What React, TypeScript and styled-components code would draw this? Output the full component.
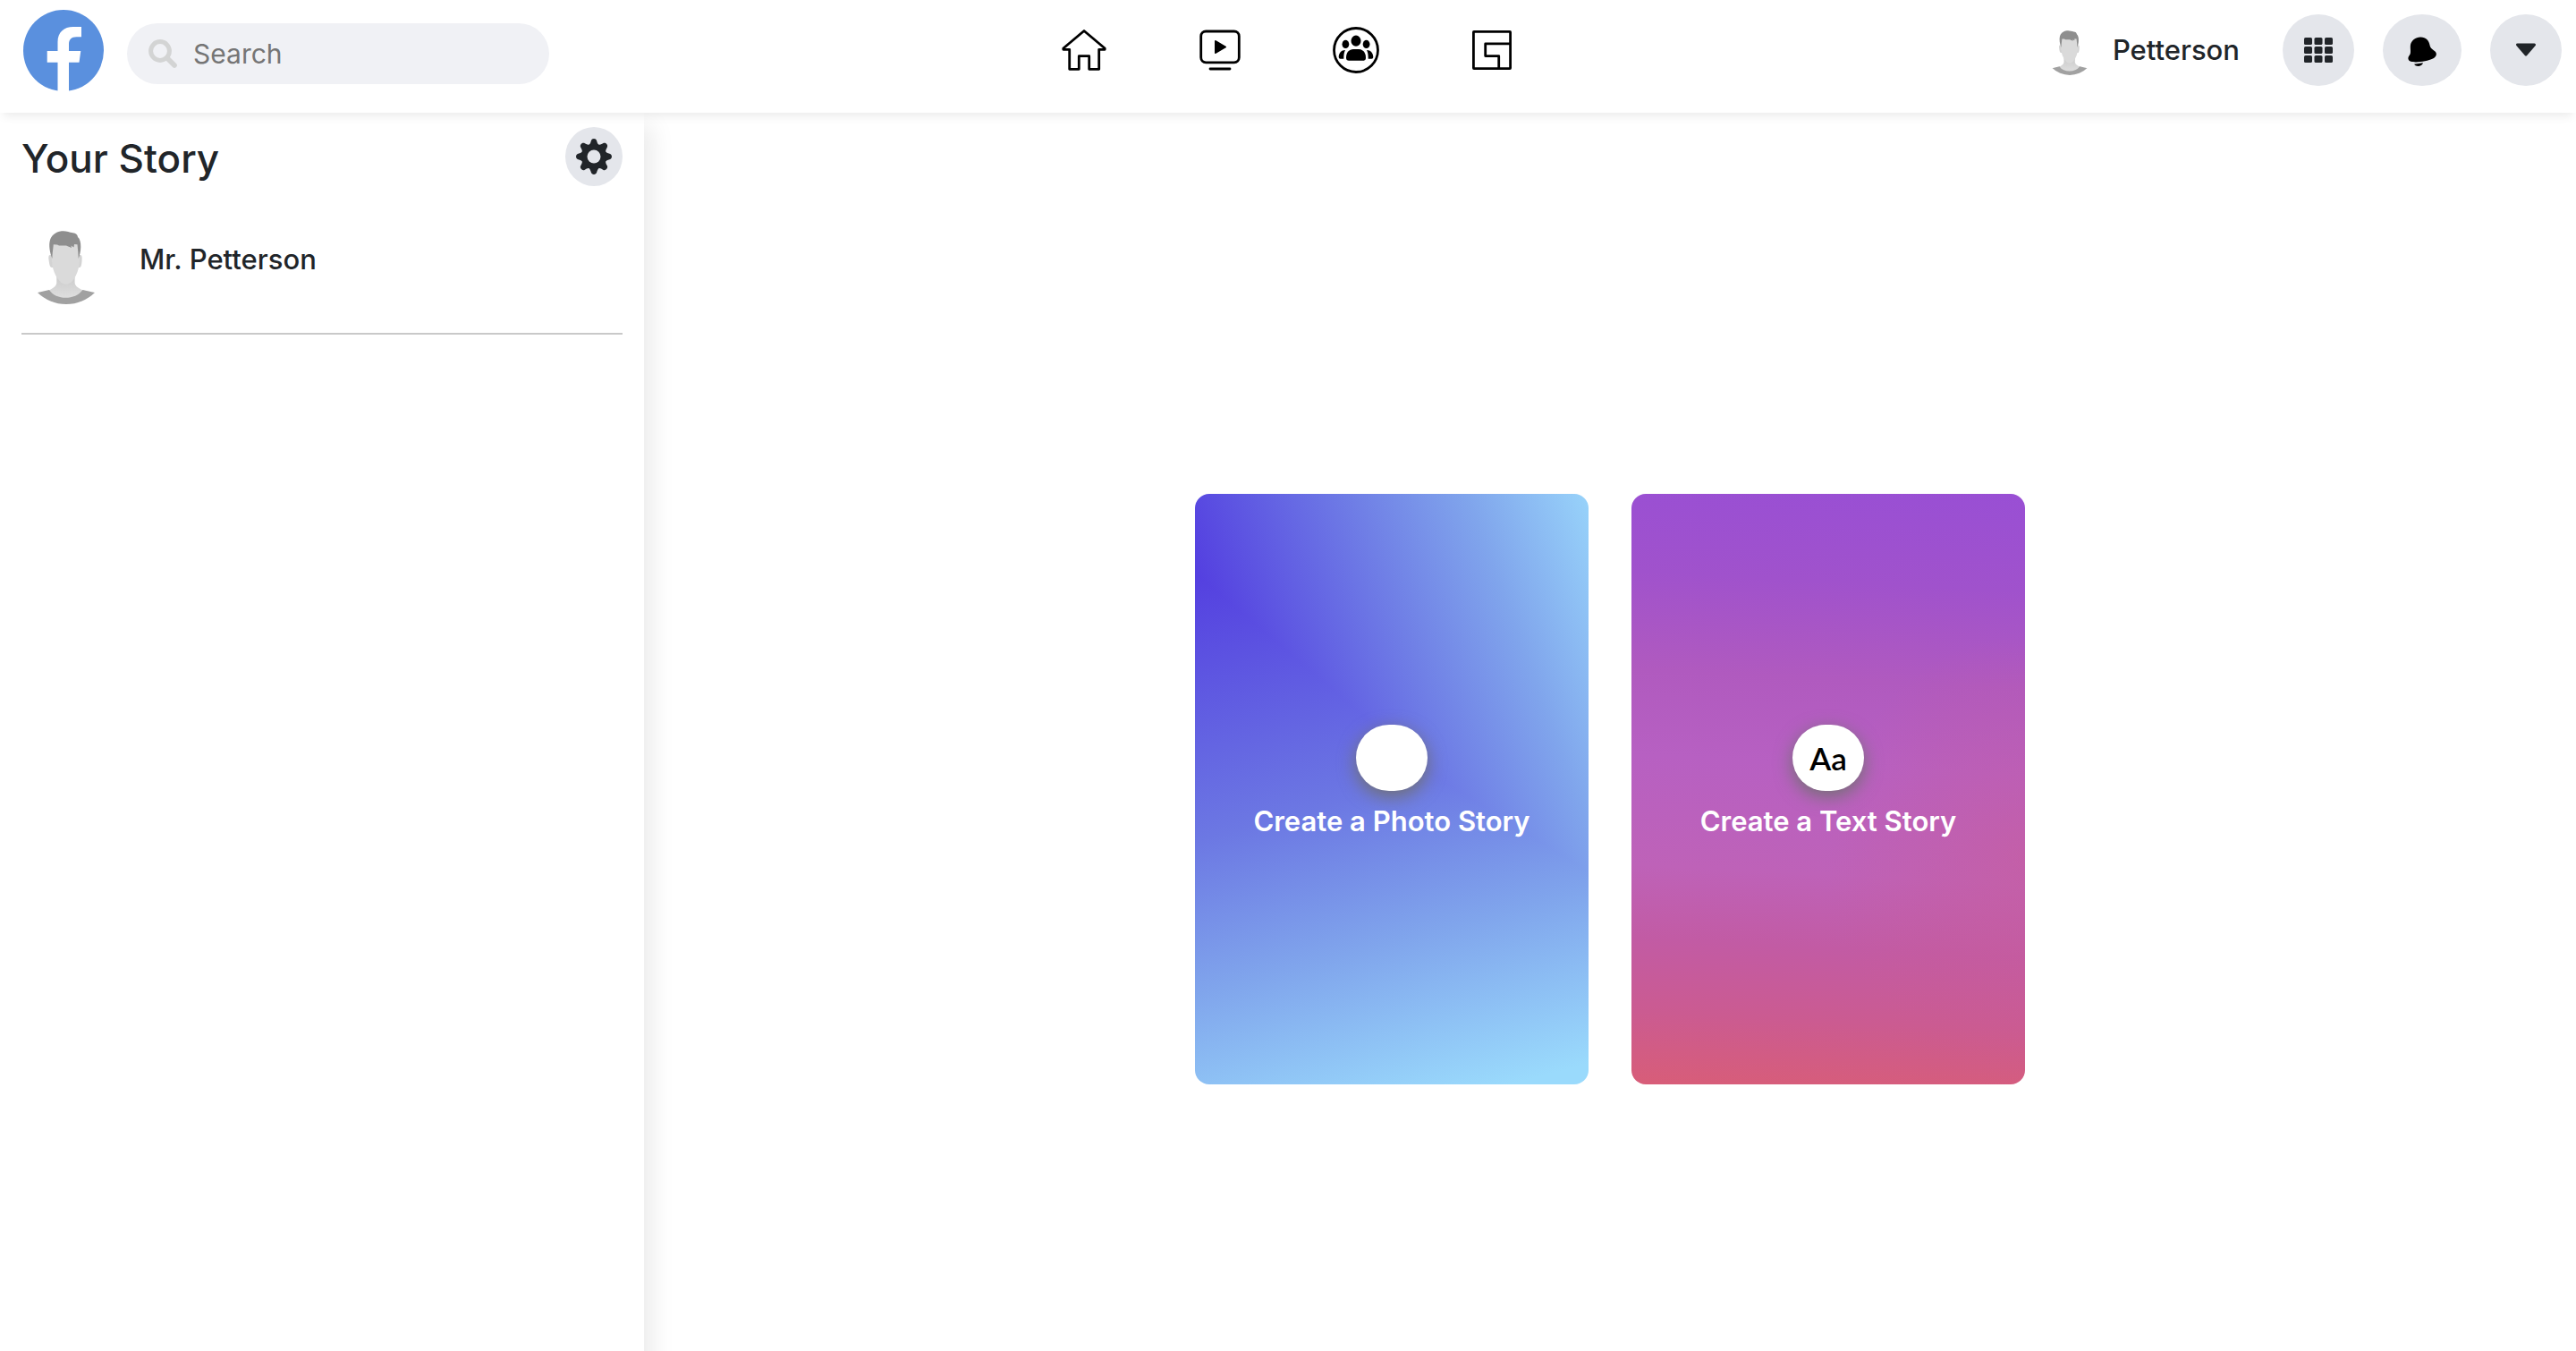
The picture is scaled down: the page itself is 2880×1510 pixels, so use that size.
import React from "react";
import styled, { createGlobalStyle } from "styled-components";

const GlobalStyle = createGlobalStyle`
  *, *::before, *::after { box-sizing: border-box; }
  body {
    margin: 0;
    background: #fff;
    color: #212529;
    font-family: Inter, Roboto, "Liberation Sans", sans-serif;
    font-size: 31px;
    line-height: 48px;
  }
  button, input { font: inherit; color: inherit; }
  a { color: inherit; text-decoration: none; }
  svg { display: block; }
`;

const Page = styled.div`
  height: 100vh;
  overflow: hidden;
  display: flex;
  flex-direction: column;
`;

const Header = styled.header`
  position: relative;
  z-index: 2;
  flex: none;
  display: grid;
  grid-template-columns: 1fr auto 1fr;
  align-items: center;
  padding: 0 16px 14px 26px;
  background: #fff;
  box-shadow: 0 8px 10px -4px rgba(0, 0, 0, 0.08);
`;

const Brand = styled.div`
  display: flex;
  align-items: center;
  gap: 26px;
  height: 112px;
`;

const SearchBox = styled.label`
  display: flex;
  align-items: center;
  gap: 18px;
  width: 472px;
  height: 68px;
  margin-top: 8px;
  padding: 0 24px;
  border-radius: 34px;
  background: #f0f1f5;
`;

const SearchInput = styled.input`
  flex: 1;
  min-width: 0;
  padding: 0;
  border: 0;
  outline: 0;
  background: transparent;
  font-size: 30px;
  &::placeholder { color: #757575; opacity: 1; }
`;

const Nav = styled.nav`
  display: flex;
  margin-left: -10px;
`;

const NavLink = styled.a`
  display: flex;
  justify-content: center;
  width: 152px;
  color: #000;
`;

const Actions = styled.div`
  display: flex;
  align-items: center;
  justify-content: flex-end;
  gap: 32px;
`;

const UserLink = styled.a`
  display: flex;
  align-items: center;
  gap: 20px;
  margin-right: 16px;
  font-weight: 500;
`;

const RoundButton = styled.button<{ $width: number; $height: number }>`
  display: flex;
  align-items: center;
  justify-content: center;
  width: ${(p) => p.$width}px;
  height: ${(p) => p.$height}px;
  padding: 0;
  border: 0;
  border-radius: 50%;
  background: #e4e6eb;
  cursor: pointer;
`;

const Body = styled.div`
  flex: none;
  display: flex;
  min-height: 100vh;
`;

const Sidebar = styled.aside`
  width: 25%;
  padding: 16px 24px;
  box-shadow: 10px 14px 24px rgba(0, 0, 0, 0.08);
`;

const SidebarHead = styled.div`
  display: flex;
  align-items: flex-start;
  justify-content: space-between;
`;

const Title = styled.h1`
  margin: 4px 0 0;
  font-size: 44px;
  line-height: 62px;
  font-weight: 500;
`;

const Profile = styled.div`
  display: flex;
  align-items: center;
  gap: 36px;
  padding: 40px 4px 32px;
  border-bottom: 2px solid #c9c9c9;
  font-weight: 500;
`;

const ProfileName = styled.span`
  padding-bottom: 8px;
`;

const Main = styled.main`
  flex: 1;
  display: flex;
  align-items: center;
  justify-content: center;
  gap: 48px;
  padding-top: 2px;
`;

const photoBackground = `
  linear-gradient(70deg, #5440e0 31%, #7080e6 62%, #80a5ec 80%, #98d3fa 100%),
  linear-gradient(165deg, #5440e0 12%, #6c78e3 50%, #80a5ec 72%, #9adafc 97%)
`;
const textBackground = `
  radial-gradient(ellipse 50% 38% at 100% 62%, rgba(204, 92, 146, 0.45), rgba(204, 92, 146, 0)),
  linear-gradient(183deg, #994fd4 0%, #a052cc 16%, #b05abf 32%, #b760c2 46%, #be62b8 64%, #c25ba4 76%, #cb5b91 88%, #d85d78 100%)
`;

const StoryCard = styled.button<{ $background: string; $blend?: string }>`
  display: flex;
  flex-direction: column;
  align-items: center;
  justify-content: center;
  gap: 10px;
  width: 440px;
  height: 660px;
  padding: 0 0 12px;
  border: 0;
  border-radius: 16px;
  background: ${(p) => p.$background};
  background-blend-mode: ${(p) => p.$blend ?? "normal"};
  color: #fff;
  font-weight: 600;
  cursor: pointer;
`;

const StoryBadge = styled.span`
  display: flex;
  align-items: center;
  justify-content: center;
  width: 80px;
  height: 74px;
  border-radius: 40px;
  background: #fff;
  box-shadow: 0 6px 20px #707070;
  color: #000;
  font-family: Lato, Inter, sans-serif;
  font-size: 35px;
  font-weight: 600;
`;

const Avatar = ({ size, id }: { size: number; id: string }) => (
  <svg width={size} height={size} viewBox="0 0 92 92" aria-hidden="true">
    <defs>
      <clipPath id={id}>
        <circle cx="46" cy="46" r="46" />
      </clipPath>
      <linearGradient id={`${id}-neck`} x1="0" y1="0" x2="0" y2="1">
        <stop offset="0" stopColor="#c9c9c9" />
        <stop offset="1" stopColor="#e0e0e0" />
      </linearGradient>
    </defs>
    <g clipPath={`url(#${id})`}>
      <path d="M35.3 58V68C35 72 31 74.5 26 77V87H66V77C60 74.5 56 72 55.6 68V58Z" fill={`url(#${id}-neck)`} />
      <path d="M27 76C31 82 38 84.8 45.5 84.8S60 82 64.5 76L80 79.5V92H12V79.5Z" fill="#a1a1a1" />
      <path d="M28 37C26 37 26.2 40 26.6 43C27.2 48 28 51 30 51H61C62.6 51 63.3 48 63.6 43C63.9 40 63.6 37 62 37Z" fill="#d3d3d3" />
      <path d="M30 24H61V44C60.500 53 57 61 53 66C48 71 43 71 38.500 66C34 61 30.500 53 30 44Z" fill="#dadada" />
      <path d="M30.400 41C27.500 34 26.500 26 27.800 21C29 16 33.500 11 41 10.300C46 9.800 49 11.500 53.500 12.200C57 12.500 58.500 14 59 17C61.500 19 62.300 23 62.300 28C62.200 33 61 38 59.700 41C59.700 36 59 31 58.500 25.300L55 25L54.500 28.500L51.500 26.500L52 29L46 26.500L38 26.500L36 25.500L31.800 25.300C31.300 31 30.400 36 30.400 41Z" fill="#8e8e8e" />
    </g>
  </svg>
);

const Logo = () => (
  <svg width="90" height="91" viewBox="0 0 90 91" aria-hidden="true">
    <ellipse cx="45" cy="45.500" rx="45" ry="45.500" fill="#5a90de" />
    <path
      fill="#fff"
      d="M38.500 92V58.700H26.700V46H38.500V36C38.500 25 45.500 19 56 19H65V30.300H59.500C53.500 30.300 51 33.500 51 38.500V46H64.300L62.500 58.700H51V92Z"
    />
  </svg>
);

const SearchIcon = () => (
  <svg width="32" height="32" viewBox="0 0 32 32" fill="none" stroke="#d3d4d4" aria-hidden="true">
    <circle cx="13" cy="13" r="10.400" strokeWidth="5" />
    <path d="M22 22L29 29" strokeWidth="5.600" strokeLinecap="round" />
  </svg>
);

const NavIcon = ({ children }: { children: React.ReactNode }) => (
  <svg
    width="52"
    height="52"
    viewBox="0 0 52 52"
    fill="none"
    stroke="currentColor"
    strokeWidth="2.800"
    strokeLinecap="round"
    strokeLinejoin="round"
    aria-hidden="true"
  >
    {children}
  </svg>
);

const groupSide = "M14 26C9.500 26 6.700 29.500 6.700 34Q6.700 35.700 8.500 35.700H12.300C12.300 31.500 12.600 28.500 14 26Z";

const navItems = [
  {
    label: "Home",
    icon: <path d="M26 4.500L2.800 24V25.300H9.700V47.300H20.300V32.700H31.700V47.300H42.700V25.300H49.200V24Z" />,
  },
  {
    label: "Watch",
    icon: (
      <>
        <rect x="4.700" y="5" width="42.600" height="34.800" rx="5.500" />
        <path d="M21 16L32 22.500L21 29Z" fill="currentColor" strokeWidth="2" />
        <path d="M15 47H37" />
      </>
    ),
  },
  {
    label: "Groups",
    icon: (
      <>
        <circle cx="26" cy="26" r="24.500" />
        <g fill="currentColor" stroke="none">
          <ellipse cx="26" cy="15.700" rx="5.500" ry="6.100" />
          <ellipse cx="14.400" cy="19.400" rx="3.900" ry="4.600" />
          <ellipse cx="37.600" cy="19.400" rx="3.900" ry="4.600" />
          <path d="M18 37.700Q15 37.700 15 34.500C15 28.500 18.500 25 23 25H29C33.500 25 37 28.500 37 34.500Q37 37.700 34 37.700Z" />
          <path d={groupSide} />
          <path d={groupSide} transform="matrix(-1 0 0 1 52 0)" />
        </g>
      </>
    ),
  },
  {
    label: "Gaming",
    icon: (
      <>
        <rect x="5.400" y="5.400" width="41.200" height="41.200" rx="0.500" />
        <path d="M46.600 18.900H18.700V32.600H33.700V46.600" />
      </>
    ),
  },
];

const GridIcon = () => (
  <svg width="32" height="28" viewBox="0 0 32 28" fill="#212529" aria-hidden="true">
    {[0, 10, 20].map((y) =>
      [0, 11.5, 23].map((x) => <rect key={`${x}-${y}`} x={x} y={y} width="9" height="8" rx="1.600" />)
    )}
  </svg>
);

const BellIcon = () => (
  <svg width="32" height="34" viewBox="0 -2 32 34" overflow="visible" fill="#000" aria-hidden="true">
    <path d="M14 .4C20 .2 23.500 4 24.400 9C25.200 13.500 28 14.300 30.500 16.500C33 19 32 22.500 28 24.500C22 27.500 9 29.500 3.500 27.800C-.5 26.500 -.2 23 2 20.500C4 18 2.300 13 3 9C4 4 8.500 .6 14 .4Z" />
    <path d="M7 30.800L17 29.200C15.500 33.600 9.500 34.200 7 30.800Z" />
  </svg>
);

const CaretIcon = () => (
  <svg width="24" height="16" viewBox="0 0 24 16" aria-hidden="true">
    <path d="M2.500 2H21.500L12 13Z" fill="#212529" stroke="#212529" strokeWidth="3" strokeLinejoin="round" />
  </svg>
);

const GearIcon = () => (
  <svg width="40" height="40" viewBox="-20 -20 40 40" fill="#212529" aria-hidden="true">
    <circle r="14.200" />
    {[0, 45, 90, 135, 180, 225, 270, 315].map((angle) => (
      <path
        key={angle}
        transform={`rotate(${angle})`}
        d="M-6 -12.500C-4.500 -14 -3.800 -15 -3.200 -17.500C-2.500 -20.800 2.500 -20.800 3.200 -17.500C3.800 -15 4.500 -14 6 -12.500Z"
      />
    ))}
    <circle r="7.500" fill="#e4e6eb" />
  </svg>
);

export default function App() {
  return (
    <>
      <GlobalStyle />
      <Page>
        <Header>
          <Brand>
            <a href="#home" aria-label="Facebook">
              <Logo />
            </a>
            <SearchBox>
              <SearchIcon />
              <SearchInput type="text" placeholder="Search" aria-label="Search" />
            </SearchBox>
          </Brand>
          <Nav>
            {navItems.map((item) => (
              <NavLink key={item.label} href={`#${item.label.toLowerCase()}`} aria-label={item.label}>
                <NavIcon>{item.icon}</NavIcon>
              </NavLink>
            ))}
          </Nav>
          <Actions>
            <UserLink href="#profile">
              <Avatar size={56} id="avatar-header" />
              Petterson
            </UserLink>
            <RoundButton $width={80} $height={80} aria-label="Menu">
              <GridIcon />
            </RoundButton>
            <RoundButton $width={88} $height={80} aria-label="Notifications">
              <BellIcon />
            </RoundButton>
            <RoundButton $width={80} $height={80} aria-label="Account">
              <CaretIcon />
            </RoundButton>
          </Actions>
        </Header>
        <Body>
          <Sidebar>
            <SidebarHead>
              <Title>Your Story</Title>
              <RoundButton $width={64} $height={66} aria-label="Story settings">
                <GearIcon />
              </RoundButton>
            </SidebarHead>
            <Profile>
              <Avatar size={92} id="avatar-profile" />
              <ProfileName>Mr. Petterson</ProfileName>
            </Profile>
          </Sidebar>
          <Main>
            <StoryCard $background={photoBackground} $blend="lighten">
              <StoryBadge />
              Create a Photo Story
            </StoryCard>
            <StoryCard $background={textBackground}>
              <StoryBadge>Aa</StoryBadge>
              Create a Text Story
            </StoryCard>
          </Main>
        </Body>
      </Page>
    </>
  );
}
